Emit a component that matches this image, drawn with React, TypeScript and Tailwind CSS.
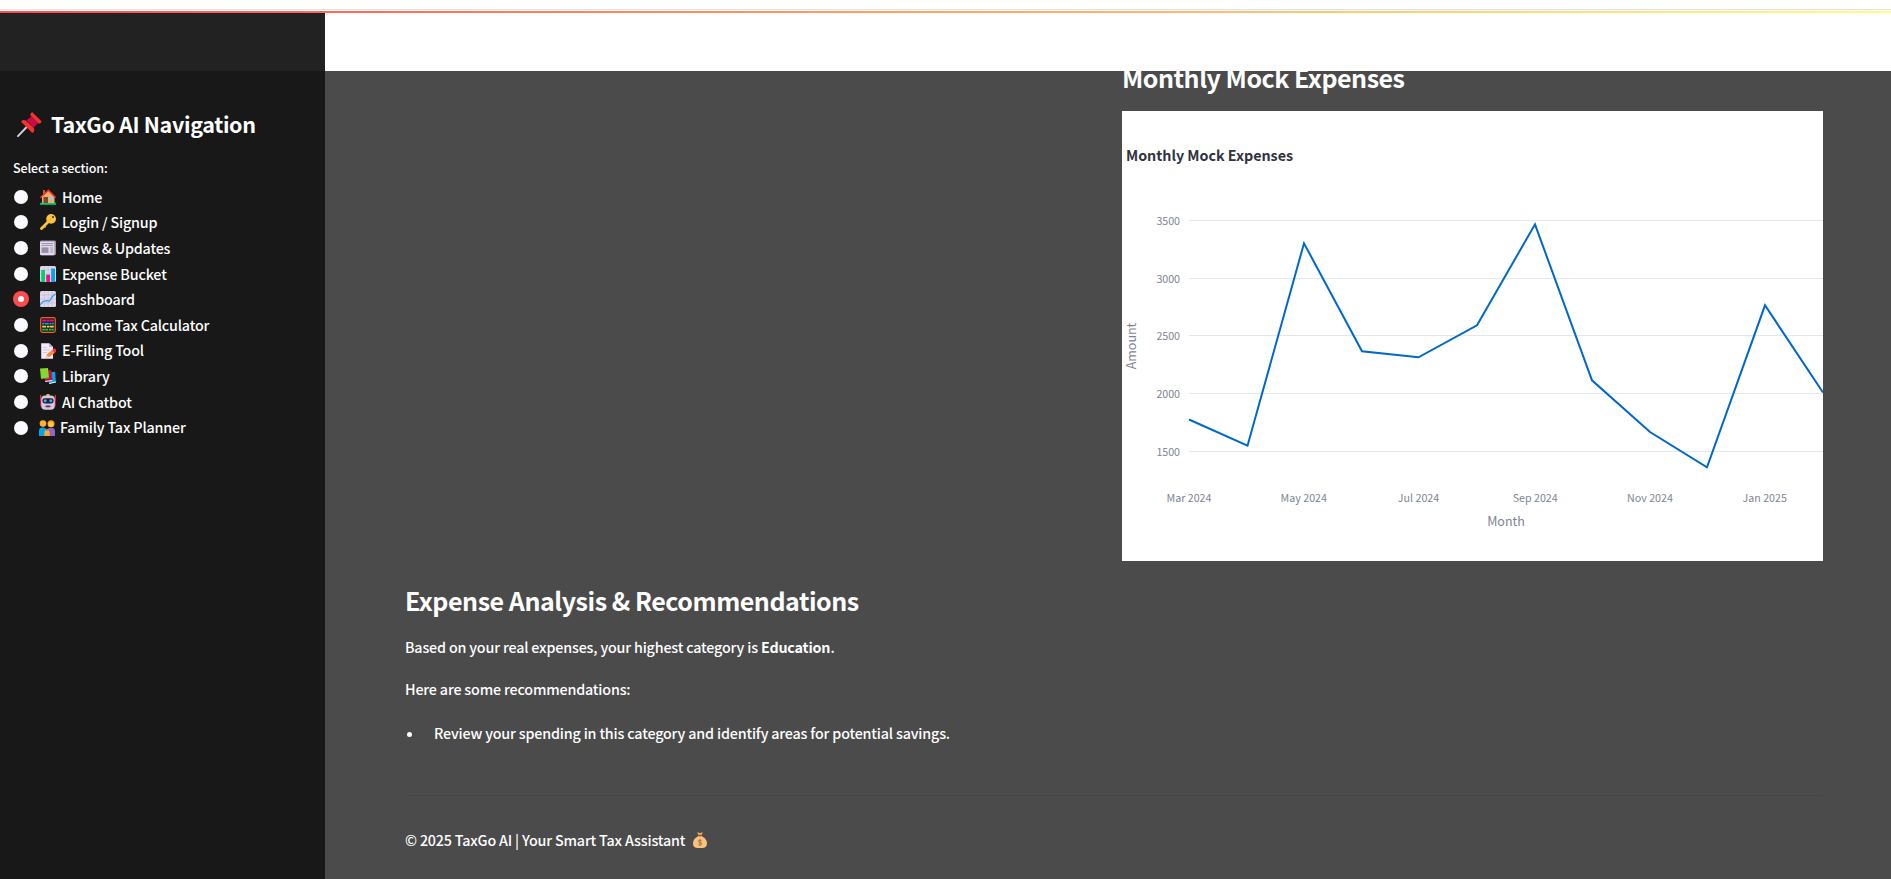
import React from 'react';

const NAV = [
  { icon: 'home', label: 'Home' },
  { icon: 'key', label: 'Login / Signup' },
  { icon: 'news', label: 'News & Updates' },
  { icon: 'bars', label: 'Expense Bucket' },
  { icon: 'trend', label: 'Dashboard' },
  { icon: 'abacus', label: 'Income Tax Calculator' },
  { icon: 'memo', label: 'E-Filing Tool' },
  { icon: 'books', label: 'Library' },
  { icon: 'robot', label: 'AI Chatbot' },
  { icon: 'family', label: 'Family Tax Planner' },
];

function Emoji({ name, className }: { name: string; className: string }) {
  return (
    <svg viewBox="0 0 16 16" className={className}>
      {name === 'home' && (
        <g>
          <rect x="0" y="13.8" width="16" height="2" rx="0.5" fill="#00d26a" />
          <rect x="3" y="1" width="2" height="5" fill="#a56953" />
          <path d="M2 7 8.5 2 14.5 8V14H2Z" fill="#f3ad61" />
          <rect x="3.5" y="8" width="4.5" height="6" fill="#7d4533" />
          <rect x="9.5" y="8" width="3.6" height="3.4" fill="#8cc8f5" />
          <path d="M.8 8.3 8.4 1.2 15.2 8.3" fill="none" stroke="#f8312f" strokeWidth="1.5" strokeLinecap="round" />
        </g>
      )}
      {name === 'key' && (
        <g>
          <path d="M9 7 1.5 14.6" stroke="#fcc23c" strokeWidth="2.8" strokeLinecap="round" />
          <path d="M4 12 5.6 13.4" stroke="#fcc23c" strokeWidth="1.6" />
          <circle cx="11.1" cy="4.9" r="4.9" fill="#fcc23c" />
          <circle cx="13" cy="3" r="1.1" fill="#483020" />
        </g>
      )}
      {name === 'news' && (
        <g>
          <rect x="0" y="0.6" width="16" height="14.6" rx="1.4" fill="#998ea4" />
          <rect x="0" y="1.4" width="14.4" height="13.8" rx="1.2" fill="#e1d8ec" />
          <path d="M1.5 3.5H13M1.5 5.4H13M10.2 8H13M10.2 10H13M10.2 12H13" stroke="#998ea4" strokeWidth="0.9" />
          <rect x="1.5" y="7.4" width="7" height="5.5" fill="#998ea4" />
        </g>
      )}
      {(name === 'bars' || name === 'trend') && (
        <g>
          <rect width="16" height="16" rx="1.6" fill="#e1d8ec" />
          <path d="M4.5 0V16M8.2 0V16M12 0V16M0 4H16M0 8H16M0 12H16" stroke="#c5b8d4" strokeWidth="0.6" />
        </g>
      )}
      {name === 'bars' && (
        <g>
          <rect x="1.2" y="4" width="3.8" height="12" fill="#00d26a" />
          <rect x="6.2" y="8.7" width="3.8" height="7.3" fill="#f70a8d" />
          <rect x="11.2" y="2.5" width="3.8" height="13.5" fill="#00a6ed" />
        </g>
      )}
      {name === 'trend' && (
        <path d="M0 14 3 10.5 6.6 9.6 9.6 10.2 12 6 15.6 2.6" fill="none" stroke="#26a3ea" strokeWidth="1.2" />
      )}
      {name === 'abacus' && (
        <g>
          <rect x="0.7" y="0.7" width="14.6" height="14.6" rx="1.8" fill="#221915" stroke="#f0641f" strokeWidth="1.2" />
          <path d="M2.2 3.5H13.8" stroke="#f70a8d" strokeWidth="1.8" strokeDasharray="4 .5 3 .5" />
          <path d="M2.2 6.6H13.8" stroke="#00a6ed" strokeWidth="1.8" strokeDasharray="2 .5 4 .7" />
          <path d="M2.2 9.6H13.8" stroke="#fcd53f" strokeWidth="1.8" strokeDasharray="4 .8 2.5 .5" />
          <path d="M2.2 12.6H13.8" stroke="#00d26a" strokeWidth="1.8" strokeDasharray="2.5 .5 3 .8" />
        </g>
      )}
      {name === 'memo' && (
        <g>
          <path d="M1.2.2H9.2L13 4V15.8H1.2Z" fill="#f1eaf8" />
          <path d="M9.2.2V4H13Z" fill="#b9aacb" />
          <path d="M3 4.5H7M3 7H10M3 9.5H7" stroke="#c9bdd6" strokeWidth="0.8" />
          <path d="M6 14.3 7 11.2 12.3 6.8 15 9.7 9.2 14Z" fill="#ff8537" />
          <path d="M12.3 6.8 13.6 5.6Q14.6 5 15.6 6.2T16 8.8L15 9.7Z" fill="#f92f60" />
          <path d="M5.5 15 6.7 12 8.9 14.1Z" fill="#ffce7c" />
        </g>
      )}
      {name === 'books' && (
        <g>
          <path d="M8 4.5 15 3.8 16 14.5 9 15.8Z" fill="#00a6ed" />
          <path d="M4 2.6 11.2 2 12.6 12.7 5 13.8Z" fill="#ca0b4a" />
          <path d="M5 13 12.4 12.1V13.1L5.3 14Z" fill="#f3eef8" />
          <path d="M9 14.9 15.9 13.6V14.6L9.2 15.9Z" fill="#f3eef8" />
          <path d="M0 .5 8 0 9 10 1 11Z" fill="#86d72f" />
          <path d="M1 10.4 9 9.5V10.4L1 11.3Z" fill="#44911b" />
        </g>
      )}
      {name === 'robot' && (
        <g>
          <path d="M.7 1V8M15.3 1V8" stroke="#f8312f" strokeWidth="1.2" />
          <rect x="0" y="6" width="16" height="6.5" rx="1" fill="#ca0b4a" />
          <rect x="6.2" y="0" width="3.6" height="2.5" rx="1" fill="#f9a23c" />
          <rect x="1.2" y="1.6" width="13.6" height="14.2" rx="4" fill="#d3c7df" />
          <rect x="2.4" y="4.2" width="11.2" height="5.2" rx="2.3" fill="#251e2d" />
          <circle cx="5.2" cy="6.8" r="1.5" fill="#26b7f5" />
          <circle cx="10.8" cy="6.8" r="1.5" fill="#26b7f5" />
          <rect x="5.5" y="11.4" width="5" height="1.9" rx="0.9" fill="#483b55" />
        </g>
      )}
      {name === 'family' && (
        <g>
          <circle cx="4" cy="3.6" r="3.3" fill="#ffb02e" />
          <circle cx="12" cy="3.8" r="3.5" fill="#ff9f20" />
          <circle cx="11.8" cy="4.4" r="2.5" fill="#ffc83d" />
          <path d="M0 16V11Q0 7.6 3.5 7.6T8 11V16Z" fill="#00a6ed" />
          <path d="M8 16V11Q8 7.8 12 7.8T16 11V16Z" fill="#8d65c5" />
          <path d="M5.2 16V12.5Q8 10.5 10.8 12.5V16Z" fill="#f8a52d" />
          <circle cx="8" cy="11.4" r="2.2" fill="#ffb02e" />
          <path d="M6 10.8Q8 7.6 10 10.8Z" fill="#c07a4a" />
        </g>
      )}
      {name === 'pin' && (
        <g>
          <path d="M6.2 9.6.6 15.4" stroke="#d8d3dc" strokeWidth="1.2" strokeLinecap="round" />
          <path d="M6 5.3 9.3 2.8 13.4 7 10.6 10Z" fill="#ca0b4a" />
          <path d="M8.7 2.2Q8.2 0.8 9.8.2L15.8 6Q15.3 7.8 13.6 7.2Z" fill="#f8312f" />
          <path d="M2.6 6.2Q3.2 4.6 5.6 5.4L10.7 10.3Q11.8 12.4 9.8 13.5Z" fill="#f8312f" />
        </g>
      )}
      {name === 'money' && (
        <g>
          <path d="M5.3 0 8 1.2 10.6 0 9.8 3.2H6.2Z" fill="#f3ad61" />
          <path d="M6 4.2H10Q15 7 15 11.2T11 16H5Q1 15.6 1 11.2T6 4.2Z" fill="#f9c27c" />
          <rect x="5.6" y="2.8" width="4.8" height="1.3" rx="0.6" fill="#a04a3b" />
          <path d="M9.6 8.6Q6.5 7.4 6.5 9T8 10.4 9.5 12 6.4 12.6M8 7V13.8" fill="none" stroke="#a56953" strokeWidth="0.9" />
        </g>
      )}
    </svg>
  );
}

const GRID = [
  { y: 109.5, label: '3500' },
  { y: 167.5, label: '3000' },
  { y: 224.5, label: '2500' },
  { y: 282.5, label: '2000' },
  { y: 340.5, label: '1500' },
];

const MONTHS = [
  { x: 67, label: 'Mar 2024' },
  { x: 181.8, label: 'May 2024' },
  { x: 296.5, label: 'Jul 2024' },
  { x: 413.2, label: 'Sep 2024' },
  { x: 528, label: 'Nov 2024' },
  { x: 642.7, label: 'Jan 2025' },
];

function ExpenseChart() {
  return (
    <svg width="701" height="450" viewBox="0 0 701 450" className="block bg-white">
      <text x="4" y="50" fill="#31333f" className="text-[14.3px] font-bold" textLength="167">
        Monthly Mock Expenses
      </text>
      {GRID.map((g) => (
        <g key={g.label}>
          <path d={`M67 ${g.y}H701`} stroke="#e3e7ee" />
          <text x="58" y={g.y + 4} textAnchor="end" fill="#808495" className="text-[10.7px]" textLength="23.5">
            {g.label}
          </text>
        </g>
      ))}
      {MONTHS.map((m) => (
        <text key={m.label} x={m.x} y="391" textAnchor="middle" fill="#808495" className="text-[10.7px]">
          {m.label}
        </text>
      ))}
      <text x="384" y="415" textAnchor="middle" fill="#808495" className="text-[12.5px]">
        Month
      </text>
      <text transform="translate(14 235) rotate(-90)" textAnchor="middle" fill="#808495" className="text-[12.5px]">
        Amount
      </text>
      <path
        d="M67 308.5 125.5 334.7 182 132.3 240 240.3 296.5 246.3 355 214.3 413 113.3 470 269.3 528 321 585 356.3 643 194.3 701 281.5"
        fill="none"
        stroke="#0068c9"
        strokeWidth="2"
      />
    </svg>
  );
}

export default function App() {
  return (
    <div className="flex h-[879px] w-[1891px] flex-col overflow-hidden bg-white font-['Noto_Sans_CJK_SC','Noto_Sans',sans-serif] text-white">
      <div className="h-[9px] shrink-0" />
      <div className="h-px shrink-0 bg-[#e3e3e3]" />
      <div className="h-px shrink-0" />
      <div className="h-0.5 shrink-0 bg-[linear-gradient(90deg,#ff4b4b,#fffd80)]" />
      <div className="flex min-h-0 flex-1">
        <aside className="flex w-[325px] shrink-0 flex-col bg-[#181818]">
          <div className="h-[58px] shrink-0 bg-[#222222]" />
          <h2 className="mt-[36px] flex h-[34px] items-center pl-[17px] text-[21.5px] font-bold tracking-[-0.34px]">
            <Emoji name="pin" className="mr-[9px] size-[25px]" />
            <span className="whitespace-nowrap">TaxGo AI Navigation</span>
          </h2>
          <p className="mt-[17px] h-[20px] pl-[13px] text-[12.5px] leading-5 font-medium tracking-[-0.13px]">Select a section:</p>
          <ul className="mt-[6px]">
            {NAV.map((item) => (
              <li key={item.label} className="flex h-[25.65px] items-center pl-[13px]">
                {item.icon === 'trend' ? (
                  <span className="flex size-4 items-center justify-center rounded-full bg-[#ff4b4b]">
                    <span className="size-1.5 rounded-full bg-white" />
                  </span>
                ) : (
                  <span className="mx-px size-3.5 rounded-full bg-[#fafaff]" />
                )}
                <Emoji name={item.icon} className={item.icon === 'family' ? 'ml-[10px] size-4' : 'ml-[11px] size-4'} />
                <span
                  className={`pb-px text-[14.3px] font-medium tracking-[-0.17px] whitespace-nowrap ${item.icon === 'family' ? 'ml-[5px]' : 'ml-[6px]'}`}
                >
                  {item.label}
                </span>
              </li>
            ))}
          </ul>
        </aside>
        <div className="flex min-w-0 flex-1 flex-col bg-[#4b4b4b]">
          <div className="h-[58px] shrink-0 bg-white" />
          <main className="flex min-h-0 flex-1 flex-col overflow-hidden pr-[68px] pl-20">
            <section className="flex w-[701px] flex-col self-end">
              <h3 className="-mt-3 h-[52px] text-[25px] leading-9 font-bold tracking-[-0.48px] whitespace-nowrap">Monthly Mock Expenses</h3>
              <ExpenseChart />
            </section>
            <h3 className="mt-[21px] h-9 text-[25px] leading-9 font-bold tracking-[-0.46px] whitespace-nowrap">
              Expense Analysis &amp; Recommendations
            </h3>
            <p className="mt-[16px] h-[26px] text-[14.3px] leading-[26px] font-medium tracking-[-0.17px]">
              Based on your real expenses, your highest category is <b>Education</b>.
            </p>
            <p className="mt-4 h-[26px] text-[14.3px] leading-[26px] font-medium tracking-[-0.17px]">Here are some recommendations:</p>
            <div className="mt-[18px] flex h-[26px] items-center text-[14.3px] leading-[26px] font-medium tracking-[-0.17px]">
              <span className="mt-0.5 ml-[2px] size-[5px] rounded-full bg-white" />
              <span className="ml-[22px]">Review your spending in this category and identify areas for potential savings.</span>
            </div>
            <div className="mt-[49px] h-px bg-[#464646]" />
            <footer className="mt-[31px] flex h-[26px] items-center text-[14.3px] font-medium tracking-[-0.17px]">
              <span>© 2025 TaxGo AI | Your Smart Tax Assistant</span>
              <Emoji name="money" className="ml-[7px] size-4" />
            </footer>
          </main>
        </div>
      </div>
    </div>
  );
}
